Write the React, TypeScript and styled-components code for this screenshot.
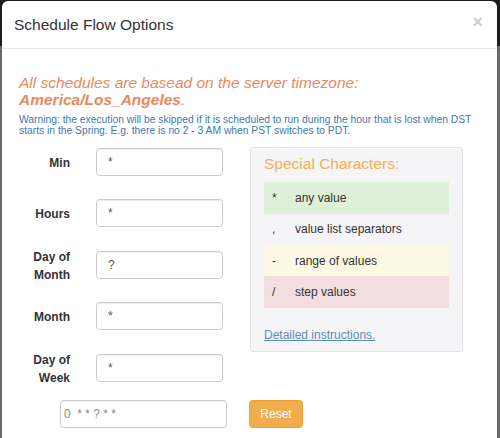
import React from "react";
import styled, { createGlobalStyle } from "styled-components";

const Global = createGlobalStyle`
  html, body { margin: 0; padding: 0; }
  body {
    background: linear-gradient(#1c1c1c 0, #1c1c1c 46px, #6a6a6a 46px);
    height: 438px;
    overflow: hidden;
    font-family: "Liberation Sans", Arial, sans-serif;
  }
`;

const Modal = styled.div`
  margin: 1px 3px 0 2px;
  height: 437px;
  background: #fff;
  border-radius: 6px 6px 0 0;
  overflow: hidden;
  color: #333;
`;

const Header = styled.div`
  height: 47px;
  border-bottom: 1px solid #e5e5e5;
  display: flex;
  align-items: center;
  justify-content: space-between;
  padding: 0 14px 0 12px;
`;

const Title = styled.h4`
  margin: 0;
  font-size: 15.5px;
  font-weight: normal;
  line-height: 1.1;
  color: #333;
  padding-top: 1px;
`;

const Close = styled.span`
  font-size: 18px;
  font-weight: bold;
  line-height: 1;
  color: #000;
  opacity: 0.2;
  margin-top: -6px;
`;

const Body = styled.div`
  padding: 26px 17px 0 17px;
`;

const Zone = styled.div`
  font-size: 15.5px;
  line-height: 16.5px;
  font-style: italic;
  color: #e9895e;
`;

const ZoneName = styled.b`
  font-weight: bold;
`;

const Warning = styled.div`
  margin-top: 7px;
  font-size: 10.3px;
  line-height: 10.8px;
  color: #4079ad;
`;

const Main = styled.div`
  margin-top: 11px;
  display: flex;
  align-items: flex-start;
`;

const FormCol = styled.div`
  width: 231px;
  flex: none;
  display: flex;
  flex-direction: column;
`;

const Fields = styled.div`
  display: flex;
  flex-direction: column;
  gap: 23.5px;
`;

const Row = styled.div`
  display: flex;
  align-items: center;
  height: 28px;
`;

const Label = styled.label`
  width: 51px;
  margin-right: 26px;
  padding-top: 2px;
  text-align: right;
  font-size: 12px;
  font-weight: bold;
  line-height: 18px;
  color: #333;
  flex: none;
`;

const Input = styled.div<{ $w: number; $pad: number; $muted?: boolean }>`
  box-sizing: border-box;
  flex: none;
  width: ${(p) => p.$w}px;
  height: 28px;
  border: 1px solid #ccc;
  border-radius: 3.5px;
  box-shadow: inset 0 1px 1px rgba(0, 0, 0, 0.075);
  background: #fff;
  padding-left: ${(p) => p.$pad}px;
  display: flex;
  align-items: center;
  font-size: 12px;
  color: ${(p) => (p.$muted ? "#8a8a8a" : "#555")};
  white-space: pre;
`;

const Bottom = styled.div`
  margin-top: 18px;
  margin-left: 41px;
  display: flex;
  align-items: center;
  gap: 22px;
`;

const Button = styled.button`
  box-sizing: border-box;
  width: 54px;
  height: 28px;
  border: 1px solid #eea236;
  border-radius: 3.5px;
  background: #f0ad4e;
  color: #fff;
  font-family: "Liberation Sans", Arial, sans-serif;
  font-size: 12px;
  padding: 0;
  flex: none;
`;

const Well = styled.div`
  box-sizing: border-box;
  width: 213px;
  height: 205px;
  margin-top: -1px;
  background: #f5f4f7;
  border: 1px solid #e3e3e3;
  border-radius: 3px;
  padding: 7px 13px 8px;
`;

const WellTitle = styled.div`
  font-size: 15.5px;
  line-height: 18px;
  color: #f1b05a;
  margin-bottom: 9px;
`;

const Table = styled.div`
  display: flex;
  flex-direction: column;
`;

const CharRow = styled.div<{ $bg: string }>`
  display: flex;
  align-items: center;
  height: 31.5px;
  background: ${(p) => p.$bg};
  border-top: 1px solid ${(p) => (p.$bg === "transparent" ? "#e6e6e6" : "transparent")};
  box-sizing: border-box;
  font-size: 12px;
  color: #333;
`;

const Char = styled.span`
  width: 31px;
  padding-left: 8px;
  box-sizing: border-box;
  flex: none;
`;

const Link = styled.a`
  display: block;
  margin-top: 19px;
  font-size: 12px;
  line-height: 16px;
  color: #5b8db6;
  text-decoration: underline;
`;

const chars = [
  { c: "*", d: "any value", bg: "#dff0d8" },
  { c: ",", d: "value list separators", bg: "transparent" },
  { c: "-", d: "range of values", bg: "#fcf8e3" },
  { c: "/", d: "step values", bg: "#f2dede" },
];

const fields: { label: React.ReactNode; value: string }[] = [
  { label: "Min", value: "*" },
  { label: "Hours", value: "*" },
  { label: (<>Day of<br />Month</>), value: "?" },
  { label: "Month", value: "*" },
  { label: (<>Day of<br />Week</>), value: "*" },
];

export default function App() {
  return (
    <>
      <Global />
      <Modal>
        <Header>
          <Title>Schedule Flow Options</Title>
          <Close>×</Close>
        </Header>
        <Body>
          <Zone>
            All schedules are basead on the server timezone:
            <br />
            <ZoneName>America/Los_Angeles</ZoneName>.
          </Zone>
          <Warning>
            Warning: the execution will be skipped if it is scheduled to run during the hour that is lost when DST
            <br />
            starts in the Spring. E.g. there is no 2 - 3 AM when PST switches to PDT.
          </Warning>
          <Main>
            <FormCol>
              <Fields>
                {fields.map((f, i) => (
                  <Row key={i}>
                    <Label>{f.label}</Label>
                    <Input $w={127} $pad={11}>{f.value}</Input>
                  </Row>
                ))}
              </Fields>
              <Bottom>
                <Input $w={167} $pad={3} $muted>0  * * ? * *</Input>
                <Button>Reset</Button>
              </Bottom>
            </FormCol>
            <Well>
              <WellTitle>Special Characters:</WellTitle>
              <Table>
                {chars.map((r) => (
                  <CharRow key={r.c} $bg={r.bg}>
                    <Char>{r.c}</Char>
                    <span>{r.d}</span>
                  </CharRow>
                ))}
              </Table>
              <Link href="#">Detailed instructions.</Link>
            </Well>
          </Main>
        </Body>
      </Modal>
    </>
  );
}
